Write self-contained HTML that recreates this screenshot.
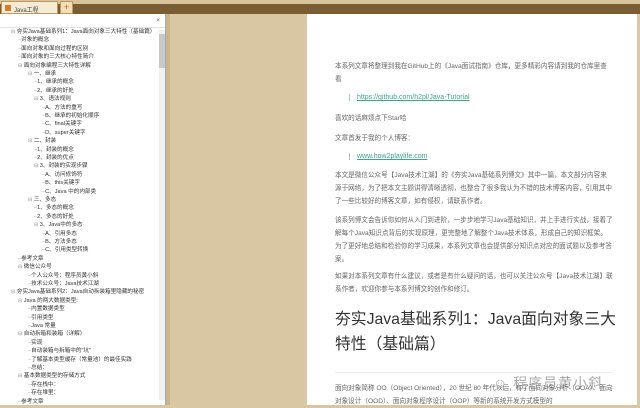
<!DOCTYPE html>
<html><head><meta charset="utf-8"><style>
*{margin:0;padding:0;box-sizing:border-box}
body{width:640px;height:405px;overflow:hidden;background:#d9c6a2;font-family:"Liberation Sans","Noto Sans CJK SC",sans-serif;position:relative}
.top{position:absolute;left:0;top:0;width:640px;height:5px;background:#d8c49a}
.bar{position:absolute;left:0;top:4px;width:640px;height:10px;background:#7b5d34}
.tab{position:absolute;left:1px;top:1px;width:57px;height:13px;background:#f6ecd6;border:1px solid #b89a66;font-size:6px;color:#444;padding:3px 0 0 12px}
.tab i{position:absolute;left:3px;top:3px;width:6px;height:6px;background:#e07a2a}
.plus{position:absolute;left:60px;top:1px;width:13px;height:13px;background:#f3dfb5;border:1px solid #b89a66;font-size:9px;line-height:10px;text-align:center;color:#c07020}
.left{position:absolute;left:0;top:14px;width:166px;height:391px;background:#fff;border-right:1px solid #aaa}
.hdr{height:14px;border-bottom:1px solid #e2e2e2;font-size:6px;color:#555;text-align:right;padding:4px 5px 0 0}
.row{position:absolute;font-size:5.6px;color:#333;white-space:nowrap;height:8px;line-height:8px}
.sb{position:absolute;left:159px;top:30px;width:6px;height:370px;background:#f0f0f0}
.sb div{position:absolute;left:0;top:4px;width:6px;height:34px;background:#c8c8c8}
.page{position:absolute;left:307px;top:14px;width:330px;height:391px;background:#fff}
.page p{position:absolute;left:28px;width:278px;font-size:6.6px;line-height:13px;color:#666}
.lk{position:absolute;left:42px;font-size:7px;color:#3aa88a;border-left:1px solid #9cc;padding-left:7px;text-decoration:underline}
h1{position:absolute;left:28px;top:293px;font-size:15.8px;line-height:25px;font-weight:normal;color:#333;width:300px;white-space:nowrap}
.hr{position:absolute;left:28px;top:358px;width:278px;height:1px;background:#eee}
.wm{position:absolute;left:186px;top:359px;font-size:14px;color:#aaa;letter-spacing:1px}
.edge{position:absolute;left:166px;top:14px;width:4px;height:391px;background:#c9b48c}
</style></head><body>
<div class="top"></div><div class="bar"></div>
<div class="tab"><i></i>Java工程师...&nbsp;&nbsp;&nbsp;×</div><div class="plus">+</div>
<div class="left"><div class="hdr">×</div></div>
<div class="edge"></div>
<div class="sb"><div></div></div>
<div id="tree"></div>
<div class="page">
<p style="top:46px">本系列文章将整理到我在GitHub上的《Java面试指南》仓库，更多精彩内容请到我的仓库里查看</p>
<div class="lk" style="top:80px">https://github.com/h2pl/Java-Tutorial</div>
<p style="top:98px">喜欢的话麻烦点下Star哈</p>
<p style="top:118px">文章首发于我的个人博客：</p>
<div class="lk" style="top:139px">www.how2playlife.com</div>
<p style="top:155px">本文是微信公众号【Java技术江湖】的《夯实Java基础系列博文》其中一篇，本文部分内容来源于网络，为了把本文主题讲得清晰透彻，也整合了很多我认为不错的技术博客内容，引用其中了一些比较好的博客文章，如有侵权，请联系作者。</p>
<p style="top:200px">该系列博文会告诉你如何从入门到进阶，一步步地学习Java基础知识，并上手进行实战，接着了解每个Java知识点背后的实现原理，更完整地了解整个Java技术体系，形成自己的知识框架。为了更好地总结和检验你的学习成果，本系列文章也会提供部分知识点对应的面试题以及参考答案。</p>
<p style="top:256px">如果对本系列文章有什么建议，或者是有什么疑问的话，也可以关注公众号【Java技术江湖】联系作者，欢迎你参与本系列博文的创作和修订。</p>
<h1>夯实Java基础系列1：Java面向对象三大<br>特性（基础篇）</h1>
<div class="hr"></div>
<div class="wm">☺ 程序员黄小斜</div>
<p style="top:368px">面向对象简称 OO（Object Oriented），20 世纪 80 年代以后，有了面向对象分析（OOA）、面向对象设计（OOD）、面向对象程序设计（OOP）等新的系统开发方式模型的</p>
</div>
<script>
var r=[[0,1,"夯实Java基础系列1：Java面向对象三大特性（基础篇）"],[1,0,"对象的概念"],[1,0,"面向对象和面向过程的区别"],[1,0,"面向对象的三大核心特性简介"],[1,1,"面向对象编程三大特性详解"],[2,1,"一、继承"],[3,0,"1、继承的概念"],[3,0,"2、继承的好处"],[3,1,"3、语法规则"],[4,0,"A、方法的重写"],[4,0,"B、继承的初始化顺序"],[4,0,"C、final关键字"],[4,0,"D、super关键字"],[2,1,"二、封装"],[3,0,"1、封装的概念"],[3,0,"2、封装的优点"],[3,1,"3、封装的实现步骤"],[4,0,"A、访问修饰符"],[4,0,"B、this关键字"],[4,0,"C、Java 中的内部类"],[2,1,"三、多态"],[3,0,"1、多态的概念"],[3,0,"2、多态的好处"],[3,1,"3、Java中的多态"],[4,0,"A、引用多态"],[4,0,"B、方法多态"],[4,0,"C、引用类型转换"],[1,0,"参考文章"],[1,1,"微信公众号"],[2,0,"个人公众号：程序员黄小斜"],[2,0,"技术公众号：Java技术江湖"],[0,1,"夯实Java基础系列2：Java自动拆装箱里隐藏的秘密"],[1,1,"Java 的两大数据类型:"],[2,0,"内置数据类型"],[2,0,"引用类型"],[2,0,"Java 常量"],[1,1,"自动拆箱和装箱（详解）"],[2,0,"实现"],[2,0,"自动装箱与拆箱中的\"坑\""],[2,0,"了解基本类型缓存（常量池）的最佳实践"],[2,0,"总结："],[1,1,"基本数据类型的存储方式"],[2,0,"存在栈中："],[2,0,"存在堆里："],[1,0,"参考文章"]];
var x=[11,18,28,34,42],h="";
r.forEach(function(e,i){var t=28+i*8.4;h+='<div class="row" style="left:'+x[e[0]]+'px;top:'+t+'px">'+(e[1]?'<span style="font-size:5px;color:#888">⊟</span> ':'<span style="color:#aaa">–</span>')+e[2]+'</div>';});
document.getElementById('tree').innerHTML=h;
</script>
</body></html>
